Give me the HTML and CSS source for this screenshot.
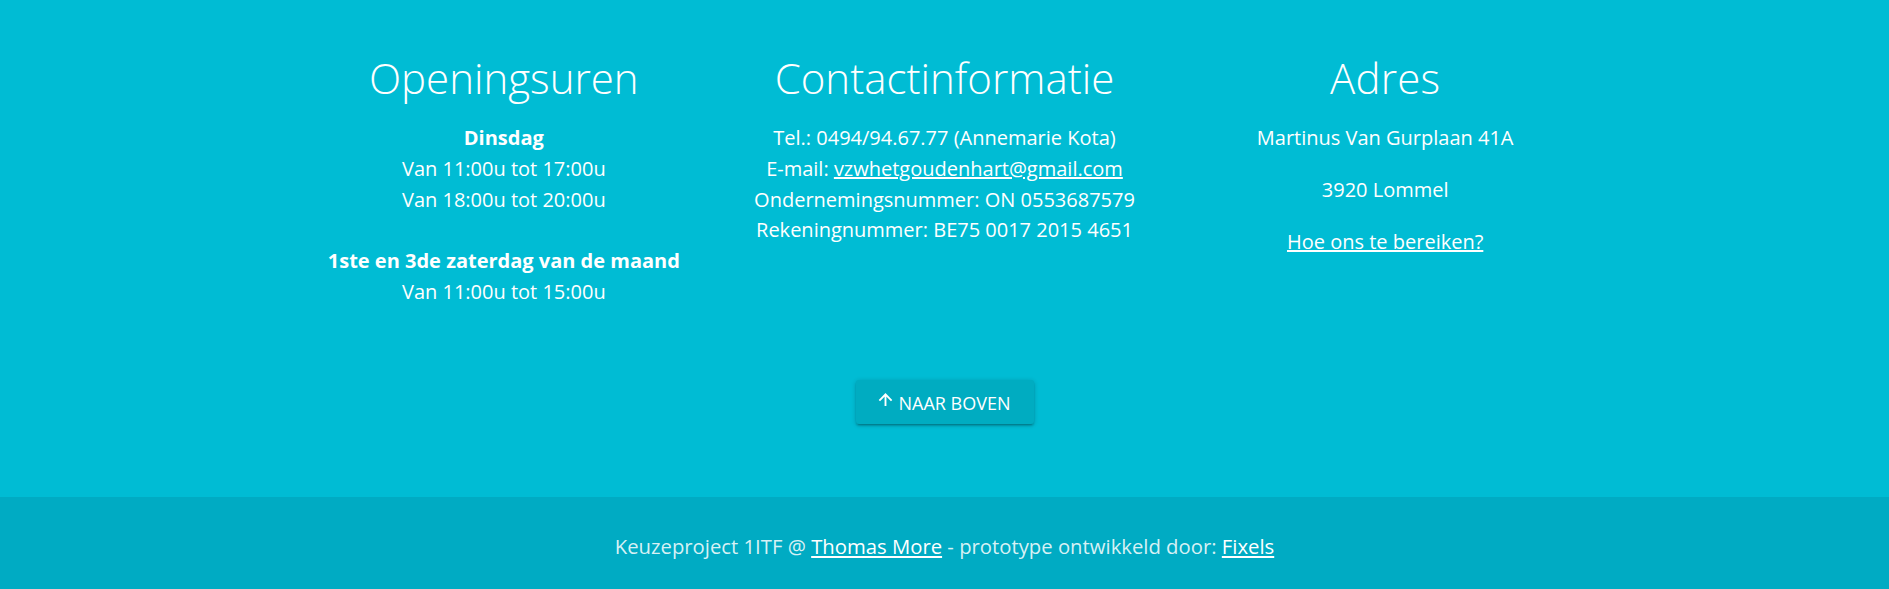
FILE: index.html
```html
<!DOCTYPE html>
<html lang="nl">
<head>
<meta charset="utf-8">
<title>Footer</title>
<link rel="stylesheet" href="styles.css">
</head>
<body>
<footer class="page-footer">
  <div class="container">
    <div class="row">
      <section class="col">
        <h4 class="title">Openingsuren</h4>
        <p class="lines"><b>Dinsdag</b><br>Van 11:00u tot 17:00u<br>Van 18:00u tot 20:00u<br><br><b>1ste en 3de zaterdag van de maand</b><br>Van 11:00u tot 15:00u</p>
      </section>
      <section class="col">
        <h4 class="title">Contactinformatie</h4>
        <p class="lines">Tel.: 0494/94.67.77 (Annemarie Kota)<br>E-mail: <a href="#">vzwhetgoudenhart@gmail.com</a><br>Ondernemingsnummer: ON 0553687579<br>Rekeningnummer: BE75 0017 2015 4651</p>
      </section>
      <section class="col">
        <h4 class="title">Adres</h4>
        <p class="para">Martinus Van Gurplaan 41A</p>
        <p class="para">3920 Lommel</p>
        <p class="para"><a href="#">Hoe ons te bereiken?</a></p>
      </section>
    </div>
    <div class="top-row">
      <a href="#" class="btn"><svg class="arrow" viewBox="0 0 16 14" width="16" height="14"><path d="M8 14V1.6M1.4 8.2L8 1.5l6.6 6.7" fill="none" stroke="currentColor" stroke-width="2"/></svg><span>NAAR BOVEN</span></a>
    </div>
  </div>
  <div class="footer-copyright">
    <p>Keuzeproject 1ITF @ <a href="#">Thomas More</a> - prototype ontwikkeld door: <a href="#">Fixels</a></p>
  </div>
</footer>
</body>
</html>
```

FILE: styles.css
```css
html, body {
  margin: 0;
  padding: 0;
  height: 100%;
}
body {
  background: #00abc3;
  font-family: "Open Sans", "Noto Sans", sans-serif;
  color: #fff;
}
.page-footer {
  background: #00bcd4;
  padding-top: 26px;
}
.container {
  width: 1322px;
  margin: 0 auto;
}
.row {
  display: grid;
  grid-template-columns: repeat(3, 1fr);
}
.col {
  text-align: center;
}
.title {
  margin: 27px 0 18px;
  font-size: 42px;
  line-height: 50px;
  font-weight: 300;
}
.col:nth-child(3) .title {
  letter-spacing: 0.2px;
}
.lines, .para {
  font-size: 20px;
  line-height: 30.8px;
  margin: 0;
  position: relative;
  top: 2px;
}
.para {
  margin-bottom: 21px;
}
.lines b {
  font-weight: 700;
}
a {
  color: #fff;
  text-decoration: underline;
}
.top-row {
  display: flex;
  justify-content: center;
  padding-top: 74px;
  padding-bottom: 73px;
}
.btn {
  display: flex;
  align-items: center;
  justify-content: center;
  gap: 5px;
  width: 178px;
  height: 44px;
  background: #00acc1;
  color: #fff;
  text-decoration: none;
  font-size: 18px;
  border-radius: 3px;
  box-shadow: 0 2px 2px 0 rgba(0,0,0,0.14), 0 3px 1px -2px rgba(0,0,0,0.12), 0 1px 5px 0 rgba(0,0,0,0.2);
}
.btn span {
  padding-top: 2px;
}
.arrow {
  width: 15px;
  height: 13px;
  margin-top: -5px;
}
.footer-copyright {
  background: #00abc3;
  height: 93px;
  display: flex;
  align-items: center;
  justify-content: center;
}
.footer-copyright p {
  margin: 0;
  padding-top: 5px;
  font-size: 20.3px;
  color: rgba(255,255,255,0.85);
}
.footer-copyright a {
  color: #fff;
}
```
